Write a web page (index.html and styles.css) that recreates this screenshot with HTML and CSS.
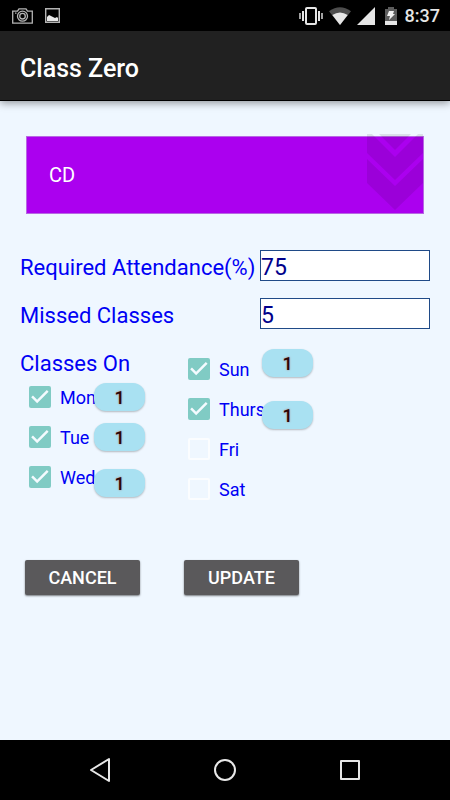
FILE: index.html
```html
<!DOCTYPE html>
<html lang="en">
<head>
    <meta charset="UTF-8">
    <meta name="viewport" content="width=device-width, initial-scale=1.0">
    <title>Class Zero</title>
    <link rel="stylesheet" href="styles.css">
</head>
<body>
    <div class="status-bar">
        <div class="status-group">
            <svg width="21" height="16" viewBox="0 0 21 16" fill="none" stroke="#b4b4b4" stroke-width="1.3">
                <path d="M.7 3.2h4.8L7 .8h7l1.5 2.4h4.8v12H.7z"/>
                <circle cx="10.5" cy="8.2" r="5"/>
                <circle cx="10.5" cy="8.2" r="2.8"/>
                <path d="M3 5.2h1.5"/>
            </svg>
            <svg width="15" height="15" viewBox="0 0 15 15">
                <path d="M.7.7h13.6v13.6H.7z" fill="none" stroke="#b4b4b4" stroke-width="1.4"/>
                <path d="M2 13V9l2-2 2 1 2 1 2 1 2-1 1 1v3z" fill="#e8e8e8"/>
            </svg>
        </div>
        <div class="status-group status-right">
            <svg width="24" height="18" viewBox="0 0 24 18" fill="none" stroke="#e6e6e6">
                <rect x="7" y="1" width="10" height="16" rx="1" stroke-width="2"/>
                <path d="M4 4v10M20 4v10" stroke-width="2"/>
                <path d="M1 6v6M23 6v6" stroke-width="1.4"/>
            </svg>
            <svg width="22" height="18" viewBox="0 0 22 18">
                <path d="M11 18L0 4.200Q11-3.800 22 4.200z" fill="#4d4d4d"/>
                <path d="M11 18L3.300 8Q11 3 18.700 8z" fill="#e6e6e6"/>
            </svg>
            <svg width="18" height="18" viewBox="0 0 18 18">
                <path d="M18 0v18H0z" fill="#e6e6e6"/>
            </svg>
            <svg class="battery" width="12" height="18" viewBox="0 0 12 18">
                <path d="M0 2h3V0h6v2h3v16H0z" fill="#5c5c5c"/>
                <path d="M0 14h12v4H0z" fill="#e6e6e6"/>
                <path d="M4 4h5L8 7h2l-6 6 1-4H2z" fill="#f2f2f2"/>
            </svg>
            <span class="clock">8:37</span>
        </div>
    </div>

    <header class="app-bar">
        <h1>Class Zero</h1>
    </header>

    <main class="content">
        <div class="subject">
            <span>CD</span>
            <svg class="subject-arrow" width="56" height="76" viewBox="0 0 56 76">
                <path d="M0 0h5L28 23 51 0h5v19L28 46 0 19zM12 0h32L28 16zM0 25l28 27 28-27v24L28 76 0 49z" fill="#000" fill-opacity=".09" fill-rule="evenodd"/>
            </svg>
        </div>

        <form class="details">
            <div class="field">
                <label for="required">Required Attendance(%)</label>
                <input type="text" id="required" value="75">
            </div>
            <div class="field">
                <label for="missed">Missed Classes</label>
                <input type="text" id="missed" value="5">
            </div>

            <div class="days">
                <div class="day-column">
                    <h2>Classes On</h2>
                    <div class="day-group">
                        <div class="day-list">
                            <label class="day"><input type="checkbox" checked>Mon</label>
                            <label class="day"><input type="checkbox" checked>Tue</label>
                            <label class="day"><input type="checkbox" checked>Wed</label>
                        </div>
                        <div class="count-list">
                            <button type="button" class="count">1</button>
                            <button type="button" class="count">1</button>
                            <button type="button" class="count count-low">1</button>
                        </div>
                    </div>
                </div>
                <div class="day-column">
                    <div class="day-group">
                        <div class="day-list">
                            <label class="day"><input type="checkbox" checked>Sun</label>
                            <label class="day"><input type="checkbox" checked>Thurs</label>
                            <label class="day"><input type="checkbox">Fri</label>
                            <label class="day"><input type="checkbox">Sat</label>
                        </div>
                        <div class="count-list">
                            <button type="button" class="count count-high">1</button>
                            <button type="button" class="count count-low">1</button>
                        </div>
                    </div>
                </div>
            </div>

            <div class="actions">
                <button type="button" class="action">CANCEL</button>
                <button type="submit" class="action">UPDATE</button>
            </div>
        </form>
    </main>

    <nav class="nav-bar">
        <button type="button" aria-label="Back">
            <svg width="24" height="26" viewBox="0 0 24 26" fill="none" stroke="#e8e8e8" stroke-width="2" stroke-linejoin="round">
                <path d="M21 2v22L3 13z"/>
            </svg>
        </button>
        <button type="button" aria-label="Home">
            <svg width="24" height="24" viewBox="0 0 24 24" fill="none" stroke="#e8e8e8" stroke-width="2">
                <circle cx="12" cy="12" r="10"/>
            </svg>
        </button>
        <button type="button" aria-label="Recent apps">
            <svg width="24" height="24" viewBox="0 0 24 24" fill="none" stroke="#e8e8e8" stroke-width="2" stroke-linejoin="round">
                <rect x="3" y="3" width="18" height="18"/>
            </svg>
        </button>
    </nav>
</body>
</html>
```

FILE: styles.css
```css
:root {
    --background-color: #eff7ff;
    --bar-color: #212121;
    --text-color: #0000f5;
    --subject-color: #ab00ef;
    --check-color: #80cbc4;
    --count-color: #a9e1f2;
    --button-color: #5a595b;
}

* {
    box-sizing: border-box;
}

body {
    margin: 0;
    min-height: 100vh;
    display: flex;
    flex-direction: column;
    font-family: Roboto, "Liberation Sans", sans-serif;
    color: var(--text-color);
    background-color: var(--background-color);
}

svg {
    display: block;
}

button {
    font-family: inherit;
    border: none;
    padding: 0;
    cursor: pointer;
}

.status-bar {
    height: 31px;
    padding: 0 10px 0 12px;
    display: flex;
    align-items: center;
    justify-content: space-between;
    background-color: #000;
}

.status-group {
    display: flex;
    align-items: center;
    gap: 12px;
}

.status-right {
    gap: 6px;
}

.battery {
    margin: 0 2px 0 4px;
}

.clock {
    color: #e6e6e6;
    font-size: 18px;
    line-height: 20px;
    font-weight: 500;
}

.app-bar {
    height: 70px;
    padding: 6px 20px 0;
    display: flex;
    align-items: center;
    background-color: var(--bar-color);
    border-bottom: 1px solid #000;
    box-shadow: 0 2px 8px rgba(0, 0, 0, 0.4);
}

.app-bar h1 {
    margin: 0;
    color: #fff;
    font-size: 25px;
    font-weight: 500;
}

.content {
    flex: 1;
    padding: 35px 20px;
}

.subject {
    position: relative;
    height: 78px;
    margin: 0 6px;
    padding: 0 22px;
    display: flex;
    align-items: center;
    color: #fff;
    font-size: 20px;
    background-color: var(--subject-color);
    border: 1px solid #b768e2;
}

/* the arrow sticks out a little over the top of the box */
.subject-arrow {
    position: absolute;
    top: -3px;
    right: 0;
}

.details {
    margin-top: 36px;
}

.field {
    display: grid;
    grid-template-columns: 240px 1fr;
    align-items: center;
    margin-bottom: 17px;
    font-size: 23px;
    white-space: nowrap;
}

.field label {
    font-size: 22px;
    padding-top: 3px;
}

.field input {
    width: 100%;
    height: 31px;
    padding: 3px 0 0;
    color: #00008b;
    font: inherit;
    background-color: #fff;
    border: 1px solid #1f4a87;
    border-radius: 0;
    outline: none;
}

.days {
    display: grid;
    grid-template-columns: 159px 1fr;
    padding-top: 3px;
}

.days h2 {
    margin: 0;
    padding-top: 2px;
    font-size: 22px;
    line-height: 26px;
    font-weight: 400;
}

.day-group {
    display: grid;
    grid-template-columns: 74px 1fr;
}

.day-column + .day-column .day-group {
    grid-template-columns: 83px 1fr;
}

.day {
    height: 40px;
    padding-left: 9px;
    display: flex;
    align-items: center;
    gap: 9px;
    font-size: 18px;
    white-space: nowrap;
}

.day input {
    appearance: none;
    flex: none;
    width: 22px;
    height: 22px;
    margin: 0;
    border: 2px solid #fbfdff;
    border-radius: 2px;
}

.day input:checked {
    border: none;
    background-color: var(--check-color);
}

.day input:checked::before {
    content: "";
    display: block;
    width: 22px;
    height: 22px;
    background-color: #f4fbff;
    clip-path: polygon(10% 51%, 18% 43%, 37% 62%, 81% 18%, 89% 26%, 37% 78%);
}

.count-list {
    display: grid;
    grid-auto-rows: 40px;
    align-items: center;
    align-content: start;
}

.count {
    width: 51px;
    height: 28px;
    color: #2b0505;
    font-size: 18px;
    font-weight: 500;
    text-shadow: 0 0 2px #b07070;
    background-color: var(--count-color);
    border-radius: 12px;
    box-shadow: 0 1px 2px rgba(0, 0, 0, 0.25);
}

.count-high {
    align-self: start;
}

.count-low {
    align-self: end;
}

.actions {
    display: flex;
    gap: 44px;
    padding: 51px 5px 0;
}

.action {
    width: 115px;
    height: 35px;
    color: #fff;
    font-size: 18px;
    font-weight: 500;
    background-color: var(--button-color);
    border-radius: 2px;
    box-shadow: 0 1px 2px rgba(0, 0, 0, 0.5);
}

.nav-bar {
    height: 60px;
    padding: 0 38px;
    display: grid;
    grid-template-columns: repeat(3, 1fr);
    align-items: center;
    justify-items: center;
    background-color: #000;
}

.nav-bar button {
    background: none;
}
```
